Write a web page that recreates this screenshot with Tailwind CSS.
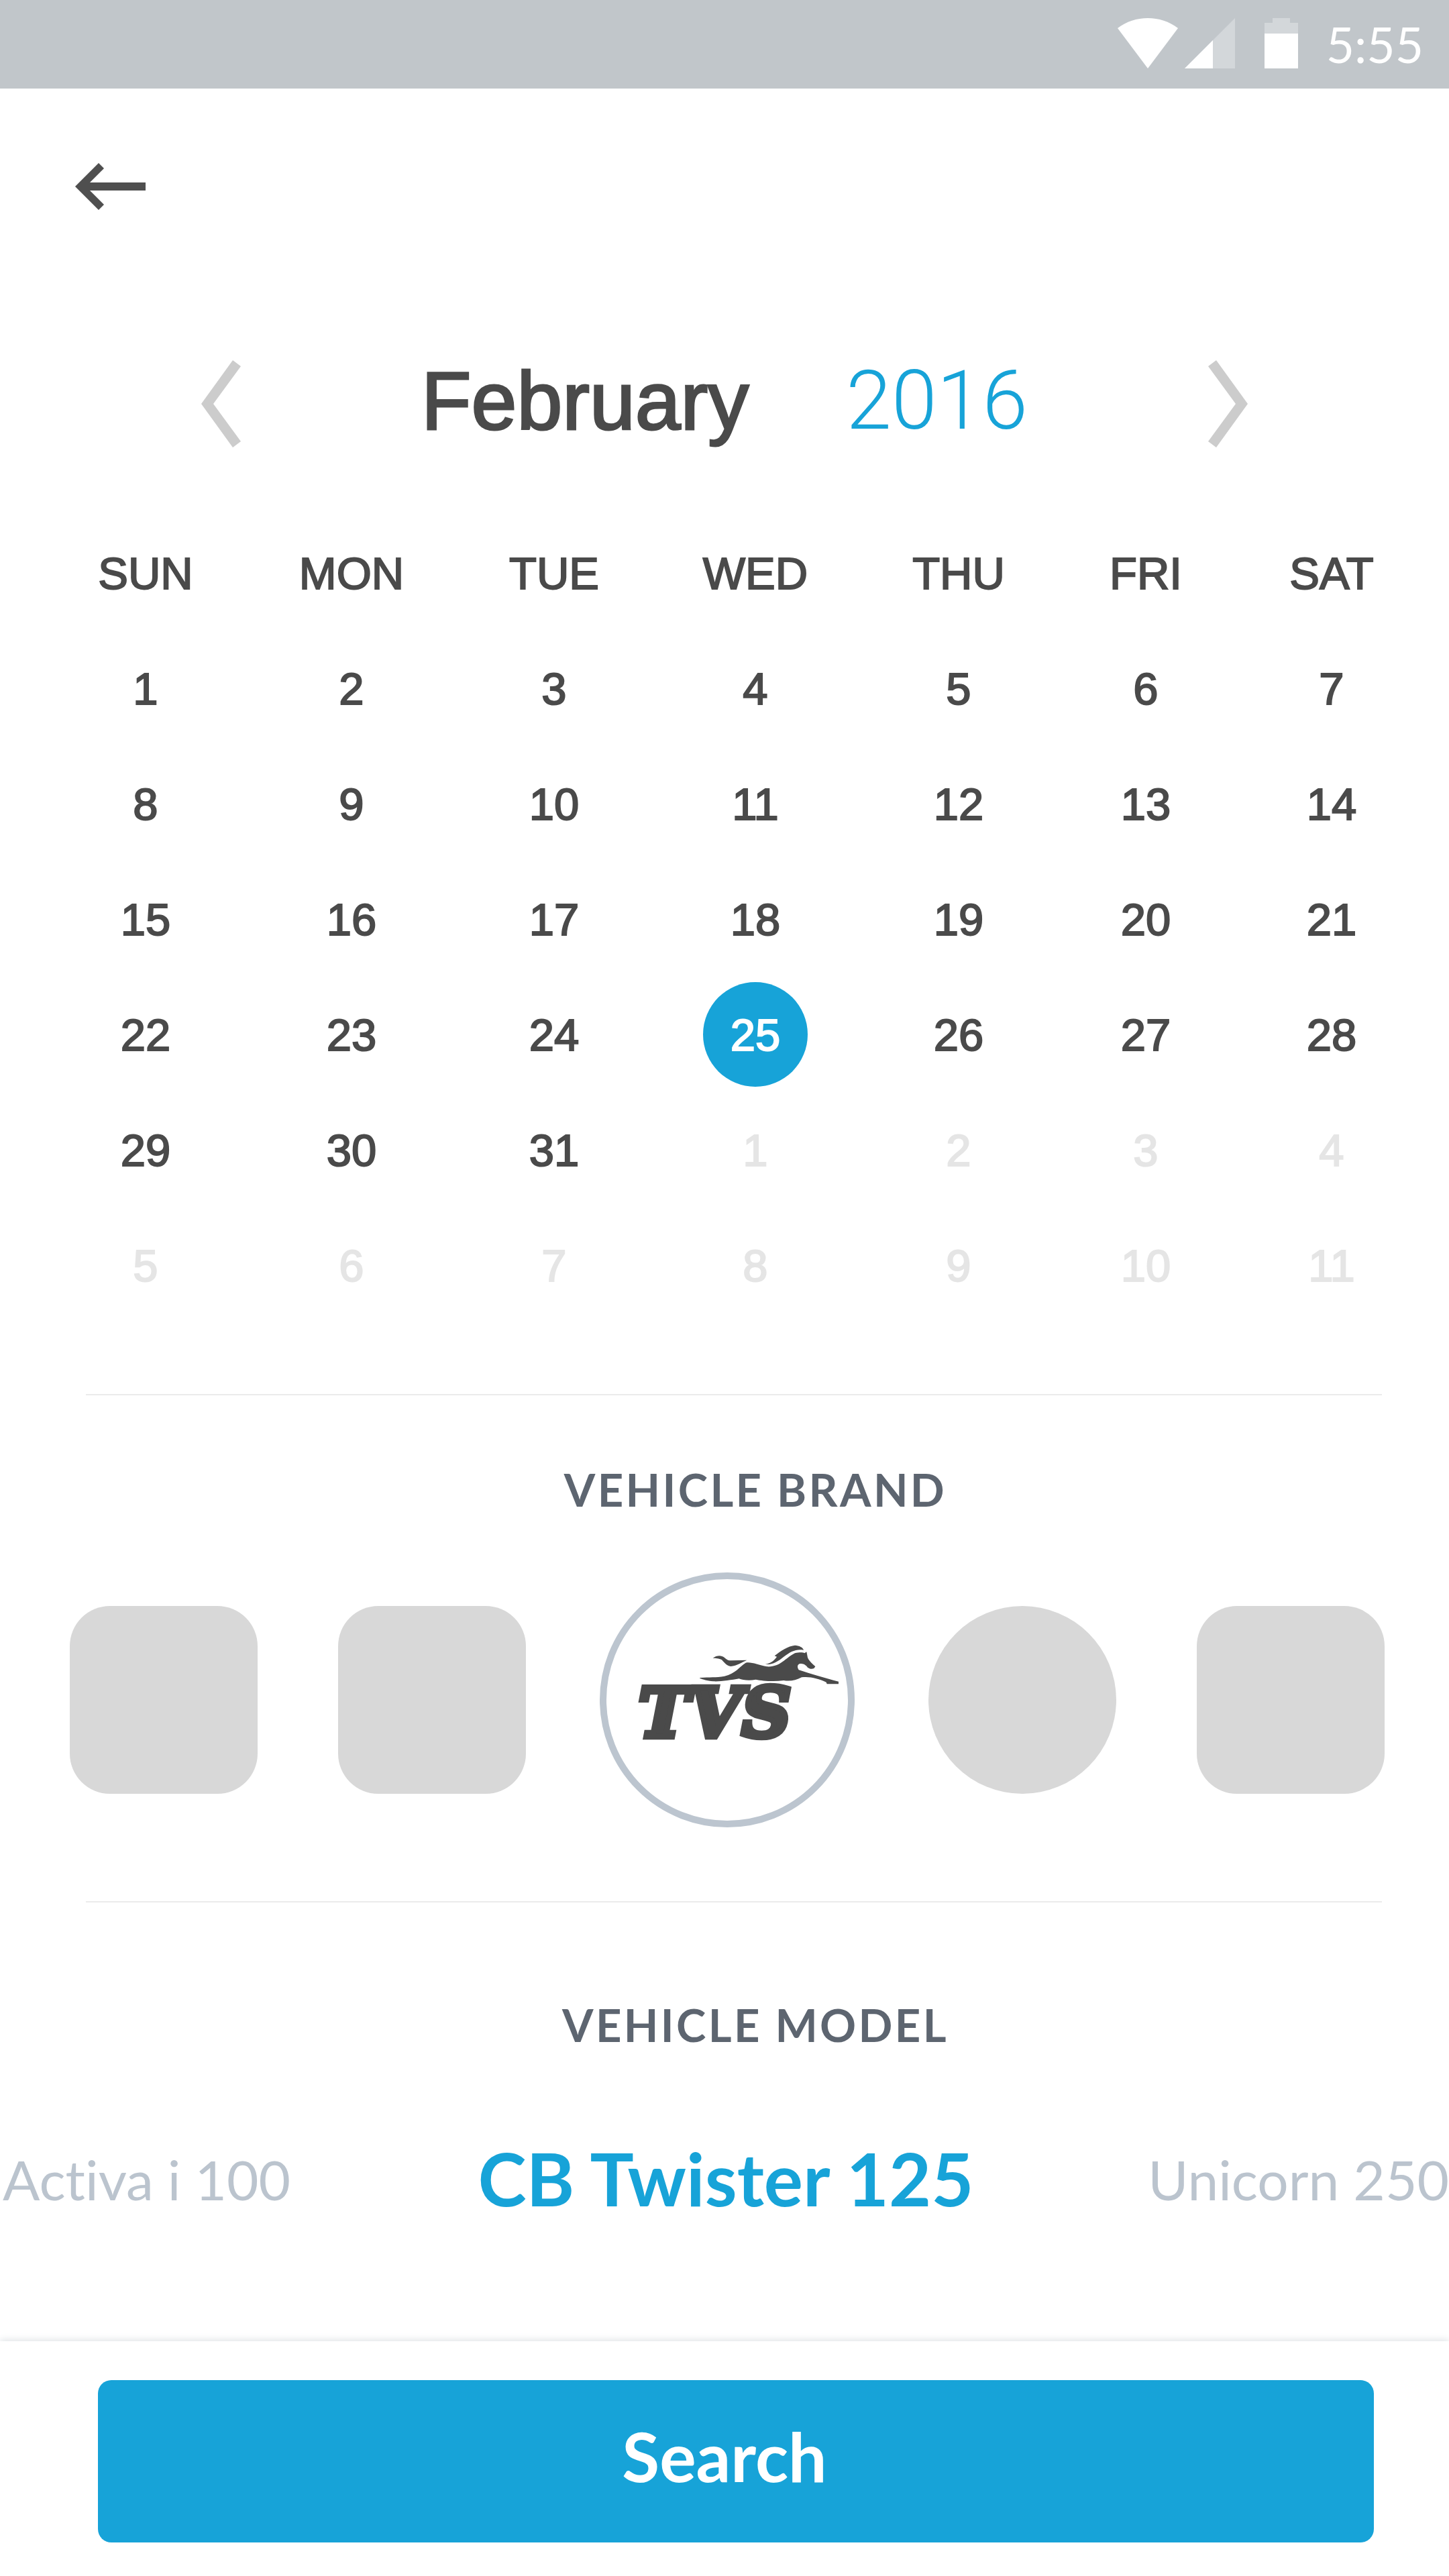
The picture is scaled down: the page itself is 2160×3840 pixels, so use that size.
<!DOCTYPE html>
<html lang="en">
<head>
<meta charset="utf-8">
<meta name="viewport" content="width=device-width, initial-scale=1">
<title>Search vehicles</title>
<script src="https://cdn.jsdelivr.net/npm/@tailwindcss/browser@4"></script>
</head>
<body class="bg-white font-[Lato,sans-serif] text-[#4a4a4a]">
<div class="flex min-h-screen w-full flex-col overflow-x-hidden">

  <!-- Status bar -->
  <div class="flex h-[132px] items-center justify-end bg-[#c1c6ca] pr-[38px] text-white">
    <svg class="h-[78px] w-[90px]" viewBox="0 0 90 78" fill="currentColor" aria-hidden="true"><path d="M45 75 0 15C26-5 64-5 90 15Z"/></svg>
    <svg class="ml-[10px] h-[78px] w-[75px]" viewBox="0 0 75 78" fill="currentColor" aria-hidden="true"><path d="M75 0V75H0Z" opacity=".3"/><path d="M42 33V75H0Z"/></svg>
    <svg class="ml-[44px] h-[78px] w-[50px]" viewBox="0 0 50 78" fill="currentColor" aria-hidden="true"><path d="M0 23V7H12V0H38V7H50V23Z" opacity=".3"/><path d="M0 23H50V75H0Z"/></svg>
    <time class="ml-[42px] text-[73px] leading-none">5:55</time>
  </div>

  <!-- App bar -->
  <header class="flex h-[292px] items-center px-28">
    <button type="button" aria-label="Back">
      <svg class="h-[70px] w-[105px]" viewBox="0 0 105 70" fill="#4f4f4f"><path d="M0 35 35 0 43 8 22 29H105V41H22L43 62 35 70Z"/></svg>
    </button>
  </header>

  <main class="flex grow flex-col">
    <section aria-label="Calendar">
      <div class="flex h-[344px] items-center justify-between px-[300px] pt-1 font-['Liberation_Sans',sans-serif] text-[122px] leading-none">
        <button type="button" aria-label="Previous month">
          <svg class="h-[138px] w-[59px]" viewBox="0 0 59 138" fill="#ccc"><path d="M0 73 47 8 59 17 18 73 59 129 47 138Z"/></svg>
        </button>
        <h1 class="flex items-center gap-[145px]">
          <span class="[-webkit-text-stroke:3px_#4a4a4a]">February</span>
          <span class="font-['Roboto',sans-serif] font-light text-[#17a3d8]">2016</span>
        </h1>
        <button type="button" aria-label="Next month">
          <svg class="h-[138px] w-[59px]" viewBox="0 0 59 138" fill="#ccc"><path d="M59 73 12 8 0 17 41 73 0 129 12 138Z"/></svg>
        </button>
      </div>

      <div class="pr-[29px] pl-[67px]">
        <table class="w-full table-fixed text-center font-['Liberation_Sans',sans-serif] text-[67px] leading-none [-webkit-text-stroke:2px_currentColor]">
          <colgroup>
            <col class="w-[300px]"><col class="w-[314px]"><col class="w-[290px]"><col class="w-[310px]"><col class="w-[296px]"><col class="w-[262px]"><col class="w-[292px]">
          </colgroup>
          <thead>
            <tr class="h-[172px]">
              <th class="font-normal" scope="col">SUN</th><th class="font-normal" scope="col">MON</th><th class="font-normal" scope="col">TUE</th><th class="font-normal" scope="col">WED</th><th class="font-normal" scope="col">THU</th><th class="font-normal" scope="col">FRI</th><th class="font-normal" scope="col">SAT</th>
            </tr>
          </thead>
          <tbody>
            <tr class="h-[172px]">
              <td><button type="button">1</button></td><td><button type="button">2</button></td><td><button type="button">3</button></td><td><button type="button">4</button></td><td><button type="button">5</button></td><td><button type="button">6</button></td><td><button type="button">7</button></td>
            </tr>
            <tr class="h-[172px]">
              <td><button type="button">8</button></td><td><button type="button">9</button></td><td><button type="button">10</button></td><td><button type="button">11</button></td><td><button type="button">12</button></td><td><button type="button">13</button></td><td><button type="button">14</button></td>
            </tr>
            <tr class="h-[172px]">
              <td><button type="button">15</button></td><td><button type="button">16</button></td><td><button type="button">17</button></td><td><button type="button">18</button></td><td><button type="button">19</button></td><td><button type="button">20</button></td><td><button type="button">21</button></td>
            </tr>
            <tr class="h-[172px]">
              <td><button type="button">22</button></td><td><button type="button">23</button></td><td><button type="button">24</button></td>
              <td><button type="button" aria-pressed="true" class="mx-auto block size-[156px] rounded-full bg-[#17a3d8] text-white">25</button></td>
              <td><button type="button">26</button></td><td><button type="button">27</button></td><td><button type="button">28</button></td>
            </tr>
            <tr class="h-[172px]">
              <td><button type="button">29</button></td><td><button type="button">30</button></td><td><button type="button">31</button></td>
              <td class="text-[#e5e5e5]"><button type="button">1</button></td><td class="text-[#e5e5e5]"><button type="button">2</button></td><td class="text-[#e5e5e5]"><button type="button">3</button></td><td class="text-[#e5e5e5]"><button type="button">4</button></td>
            </tr>
            <tr class="h-[172px] text-[#e5e5e5]">
              <td><button type="button">5</button></td><td><button type="button">6</button></td><td><button type="button">7</button></td><td><button type="button">8</button></td><td><button type="button">9</button></td><td><button type="button">10</button></td><td><button type="button">11</button></td>
            </tr>
          </tbody>
        </table>
      </div>
    </section>

    <hr class="mt-[106px] mr-[100px] ml-32 border-t-2 border-[#ebebeb]">

    <section aria-labelledby="brand">
      <h2 id="brand" class="mt-[100px] pl-[92px] text-center text-[67px] leading-[80px] font-bold tracking-wider text-[#5d6570]">VEHICLE BRAND</h2>
      <div class="mt-[84px] flex items-center justify-between pr-24 pl-[104px]">
        <div class="flex gap-[120px]">
          <button type="button" aria-label="Brand 1" class="size-[280px] rounded-[60px] bg-[#d8d8d8]"></button>
          <button type="button" aria-label="Brand 2" class="size-[280px] rounded-[60px] bg-[#d8d8d8]"></button>
        </div>
        <button type="button" aria-label="TVS" aria-pressed="true" class="flex size-[380px] items-center justify-center rounded-full border-[10px] border-[#bcc5cf] pl-[14px]">
          <svg class="h-[200px] w-[322px] shrink-0" viewBox="0 11 966 600" fill="#4a4a4a">
            <path d="M340 212C385 208 410 212 450 205 500 192 515 165 545 145 570 140 600 155 640 162 700 165 720 125 765 102 785 98 800 98 808 102L817 96 822 122C830 140 845 150 856 162L850 170C840 174 830 172 822 166 815 155 800 145 785 150 775 155 775 165 782 177 830 192 900 215 960 229V240H908L905 232C870 215 830 205 795 210 770 225 740 228 715 224 670 230 620 226 590 220 560 226 530 222 515 216 480 222 430 230 400 228 370 225 355 220 340 215Z"/>
            <path d="M632 152C660 145 672 135 684 118L674 114C700 92 735 70 765 67 785 68 800 76 804 88 770 82 745 95 715 118 690 138 665 155 632 152Z"/>
            <path d="M398 124C415 112 435 110 450 122 460 130 465 136 480 135L550 133C530 142 505 158 478 161 460 160 450 145 438 132 425 124 410 125 398 124Z"/>
            <text x="66" y="476" stroke="#4a4a4a" stroke-width="26" class="font-['DejaVu_Serif',serif] text-[304px] font-bold italic">TVS</text>
          </svg>
        </button>
        <div class="flex gap-[120px]">
          <button type="button" aria-label="Brand 4" class="size-[280px] rounded-full bg-[#d8d8d8]"></button>
          <button type="button" aria-label="Brand 5" class="size-[280px] rounded-[60px] bg-[#d8d8d8]"></button>
        </div>
      </div>
    </section>

    <hr class="mt-[110px] mr-[100px] ml-32 border-t-2 border-[#ebebeb]">

    <section aria-labelledby="model">
      <h2 id="model" class="mt-[142px] pl-[92px] text-center text-[67px] leading-[80px] font-bold tracking-wider text-[#5d6570]">VEHICLE MODEL</h2>
      <div class="mt-[124px] grid h-32 grid-cols-[1fr_auto_1fr] items-center pl-1 text-[82px] leading-none whitespace-nowrap text-[#bbc4ce] [font-variant-ligatures:none]">
        <button type="button" class="pt-1 text-left">Activa i 100</button>
        <button type="button" aria-pressed="true" class="text-[109px] font-bold text-[#17a3d8]">CB Twister 125</button>
        <button type="button" class="pt-1 text-right">Unicorn 250</button>
      </div>
    </section>
  </main>

  <footer class="mt-[180px] bg-white pt-[58px] pr-28 pb-[50px] pl-[146px] shadow-[0_-2px_10px_#dfe3e6]">
    <button type="submit" class="h-[242px] w-full rounded-[20px] bg-[#17a3d8] pr-[34px] pb-[16px] text-center text-[102px] leading-none font-bold text-white">Search</button>
  </footer>
</div>
</body>
</html>
